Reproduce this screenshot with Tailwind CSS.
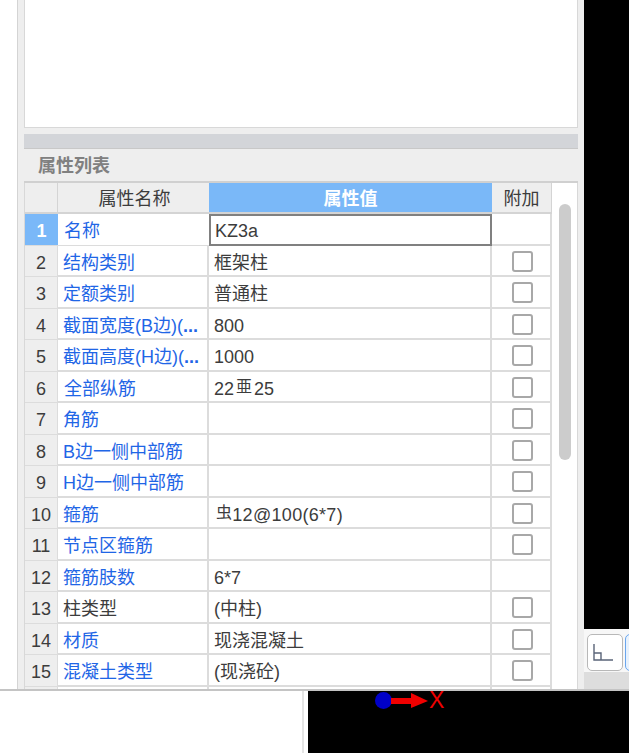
<!DOCTYPE html>
<html lang="zh-CN">

<head>
    <meta charset="UTF-8">
    <meta name="viewport" content="width=device-width, initial-scale=1.0">
    <title>属性列表</title>
    <script src="https://cdn.jsdelivr.net/npm/@tailwindcss/browser@4"></script>
</head>

<body class="bg-white overflow-hidden font-['Liberation_Sans','Noto_Sans_CJK_SC',sans-serif] text-[18px] text-[#3c3c3c]">
    <div class="relative w-[629px] h-[753px] flex flex-col">
        <div class="flex h-[691px] border-b-2 border-[#c4c4c4]">
            <div class="w-[17px] shrink-0 bg-white"></div>
            <!-- property panel -->
            <div class="w-[567px] shrink-0 flex flex-col bg-[#eeeeee] border-l border-[#d4d4d4] pl-[6px] pr-[6px]">
                <div class="h-[128px] bg-white border border-t-0 border-[#d8d8d8]"></div>
                <div class="h-[6px]"></div>
                <div class="h-[15px] bg-[#d3d5d9] border-b border-[#c8c8c8]"></div>
                <div class="h-[32px] pl-[14px] pt-[2px] flex items-center text-[#808080] font-bold">属性列表</div>
                <div class="h-[2px] bg-[#d0d0d0]"></div>
                <div class="flex flex-1 min-h-0 bg-white border-r border-l border-[#d8d8d8]">
                    <div class="w-[527px] shrink-0 overflow-hidden">
                        <!-- header -->
                        <div class="flex h-[31px] text-center leading-[33px] border-b-2 border-[#d4d4d4]">
                            <div class="w-[33px] bg-[#eeeeee] border-r border-[#d4d4d4]"></div>
                            <div class="w-[151px] bg-[#eeeeee] pl-[2px]">属性名称</div>
                            <div class="w-[283px] bg-[#7ab8f8] text-white font-bold">属性值</div>
                            <div class="w-[60px] bg-[#eeeeee] border-r border-[#d4d4d4]">附加</div>
                        </div>
                        <!-- rows -->
                        <div class="grid grid-cols-[33px_151px_283px_60px] auto-rows-[31.5px] leading-[34px]">
                            <div class="bg-[#7ab8f8] text-white font-bold text-center border-b border-[#dcdcdc]">1</div>
                            <div class="pl-[6px] text-[#1f66e6] border-b border-[#dcdcdc]">名称</div>
                            <div class="pl-[4px] border-2 border-[#808080] leading-[30px]">KZ3a</div>
                            <div class="border-r-2 border-b-2 border-[#dcdcdc]"></div>

                            <div class="bg-[#eeeeee] text-center border-r border-b border-[#dcdcdc]">2</div>
                            <div class="pl-[5px] text-[#1f66e6] border-r-2 border-b-2 border-[#dcdcdc]">结构类别</div>
                            <div class="pl-[5px] border-r-2 border-b-2 border-[#dcdcdc]">框架柱</div>
                            <div class="border-r-2 border-b-2 border-[#dcdcdc] flex items-center justify-center"><span class="w-[21px] h-[21px] ml-[2px] mt-[2px] border-2 border-[#a8a8a8] rounded-[3px] bg-white"></span></div>

                            <div class="bg-[#eeeeee] text-center border-r border-b border-[#dcdcdc]">3</div>
                            <div class="pl-[5px] text-[#1f66e6] border-r-2 border-b-2 border-[#dcdcdc]">定额类别</div>
                            <div class="pl-[5px] border-r-2 border-b-2 border-[#dcdcdc]">普通柱</div>
                            <div class="border-r-2 border-b-2 border-[#dcdcdc] flex items-center justify-center"><span class="w-[21px] h-[21px] ml-[2px] mt-[2px] border-2 border-[#a8a8a8] rounded-[3px] bg-white"></span></div>

                            <div class="bg-[#eeeeee] text-center border-r border-b border-[#dcdcdc]">4</div>
                            <div class="pl-[5px] text-[#1f66e6] border-r-2 border-b-2 border-[#dcdcdc] whitespace-nowrap overflow-hidden">截面宽度(B边)(<b>...</b></div>
                            <div class="pl-[5px] border-r-2 border-b-2 border-[#dcdcdc]">800</div>
                            <div class="border-r-2 border-b-2 border-[#dcdcdc] flex items-center justify-center"><span class="w-[21px] h-[21px] ml-[2px] mt-[2px] border-2 border-[#a8a8a8] rounded-[3px] bg-white"></span></div>

                            <div class="bg-[#eeeeee] text-center border-r border-b border-[#dcdcdc]">5</div>
                            <div class="pl-[5px] text-[#1f66e6] border-r-2 border-b-2 border-[#dcdcdc] whitespace-nowrap overflow-hidden">截面高度(H边)(<b>...</b></div>
                            <div class="pl-[5px] border-r-2 border-b-2 border-[#dcdcdc]">1000</div>
                            <div class="border-r-2 border-b-2 border-[#dcdcdc] flex items-center justify-center"><span class="w-[21px] h-[21px] ml-[2px] mt-[2px] border-2 border-[#a8a8a8] rounded-[3px] bg-white"></span></div>

                            <div class="bg-[#eeeeee] text-center border-r border-b border-[#dcdcdc]">6</div>
                            <div class="pl-[6px] text-[#1f66e6] border-r-2 border-b-2 border-[#dcdcdc]">全部纵筋</div>
                            <div class="pl-[5px] border-r-2 border-b-2 border-[#dcdcdc] flex items-start"><span>22</span><span class="text-[16px] leading-[30px] px-[2px]">亜</span><span>25</span></div>
                            <div class="border-r-2 border-b-2 border-[#dcdcdc] flex items-center justify-center"><span class="w-[21px] h-[21px] ml-[2px] mt-[2px] border-2 border-[#a8a8a8] rounded-[3px] bg-white"></span></div>

                            <div class="bg-[#eeeeee] text-center border-r border-b border-[#dcdcdc]">7</div>
                            <div class="pl-[5px] text-[#1f66e6] border-r-2 border-b-2 border-[#dcdcdc]">角筋</div>
                            <div class="pl-[5px] border-r-2 border-b-2 border-[#dcdcdc]"></div>
                            <div class="border-r-2 border-b-2 border-[#dcdcdc] flex items-center justify-center"><span class="w-[21px] h-[21px] ml-[2px] mt-[2px] border-2 border-[#a8a8a8] rounded-[3px] bg-white"></span></div>

                            <div class="bg-[#eeeeee] text-center border-r border-b border-[#dcdcdc]">8</div>
                            <div class="pl-[5px] text-[#1f66e6] border-r-2 border-b-2 border-[#dcdcdc] whitespace-nowrap">B边一侧中部筋</div>
                            <div class="pl-[5px] border-r-2 border-b-2 border-[#dcdcdc]"></div>
                            <div class="border-r-2 border-b-2 border-[#dcdcdc] flex items-center justify-center"><span class="w-[21px] h-[21px] ml-[2px] mt-[2px] border-2 border-[#a8a8a8] rounded-[3px] bg-white"></span></div>

                            <div class="bg-[#eeeeee] text-center border-r border-b border-[#dcdcdc]">9</div>
                            <div class="pl-[5px] text-[#1f66e6] border-r-2 border-b-2 border-[#dcdcdc] whitespace-nowrap">H边一侧中部筋</div>
                            <div class="pl-[5px] border-r-2 border-b-2 border-[#dcdcdc]"></div>
                            <div class="border-r-2 border-b-2 border-[#dcdcdc] flex items-center justify-center"><span class="w-[21px] h-[21px] ml-[2px] mt-[2px] border-2 border-[#a8a8a8] rounded-[3px] bg-white"></span></div>

                            <div class="bg-[#eeeeee] text-center border-r border-b border-[#dcdcdc]">10</div>
                            <div class="pl-[5px] text-[#1f66e6] border-r-2 border-b-2 border-[#dcdcdc]">箍筋</div>
                            <div class="pl-[7px] tracking-[0.3px] border-r-2 border-b-2 border-[#dcdcdc] flex items-start"><span class="text-[16px] leading-[30px]">虫</span><span>12@100(6*7)</span></div>
                            <div class="border-r-2 border-b-2 border-[#dcdcdc] flex items-center justify-center"><span class="w-[21px] h-[21px] ml-[2px] mt-[2px] border-2 border-[#a8a8a8] rounded-[3px] bg-white"></span></div>

                            <div class="bg-[#eeeeee] text-center border-r border-b border-[#dcdcdc]">11</div>
                            <div class="pl-[5px] text-[#1f66e6] border-r-2 border-b-2 border-[#dcdcdc]">节点区箍筋</div>
                            <div class="pl-[5px] border-r-2 border-b-2 border-[#dcdcdc]"></div>
                            <div class="border-r-2 border-b-2 border-[#dcdcdc] flex items-center justify-center"><span class="w-[21px] h-[21px] ml-[2px] mt-[2px] border-2 border-[#a8a8a8] rounded-[3px] bg-white"></span></div>

                            <div class="bg-[#eeeeee] text-center border-r border-b border-[#dcdcdc]">12</div>
                            <div class="pl-[5px] text-[#1f66e6] border-r-2 border-b-2 border-[#dcdcdc]">箍筋肢数</div>
                            <div class="pl-[5px] border-r-2 border-b-2 border-[#dcdcdc]">6*7</div>
                            <div class="border-r-2 border-b-2 border-[#dcdcdc]"></div>

                            <div class="bg-[#eeeeee] text-center border-r border-b border-[#dcdcdc]">13</div>
                            <div class="pl-[5px] border-r-2 border-b-2 border-[#dcdcdc]">柱类型</div>
                            <div class="pl-[5px] border-r-2 border-b-2 border-[#dcdcdc]">(中柱)</div>
                            <div class="border-r-2 border-b-2 border-[#dcdcdc] flex items-center justify-center"><span class="w-[21px] h-[21px] ml-[2px] mt-[2px] border-2 border-[#a8a8a8] rounded-[3px] bg-white"></span></div>

                            <div class="bg-[#eeeeee] text-center border-r border-b border-[#dcdcdc]">14</div>
                            <div class="pl-[5px] text-[#1f66e6] border-r-2 border-b-2 border-[#dcdcdc]">材质</div>
                            <div class="pl-[5px] border-r-2 border-b-2 border-[#dcdcdc]">现浇混凝土</div>
                            <div class="border-r-2 border-b-2 border-[#dcdcdc] flex items-center justify-center"><span class="w-[21px] h-[21px] ml-[2px] mt-[2px] border-2 border-[#a8a8a8] rounded-[3px] bg-white"></span></div>

                            <div class="bg-[#eeeeee] text-center border-r border-b border-[#dcdcdc]">15</div>
                            <div class="pl-[5px] text-[#1f66e6] border-r-2 border-b-2 border-[#dcdcdc]">混凝土类型</div>
                            <div class="pl-[5px] border-r-2 border-b-2 border-[#dcdcdc]">(现浇砼)</div>
                            <div class="border-r-2 border-b-2 border-[#dcdcdc] flex items-center justify-center"><span class="w-[21px] h-[21px] ml-[2px] mt-[2px] border-2 border-[#a8a8a8] rounded-[3px] bg-white"></span></div>

                            <div class="bg-[#eeeeee] border-r border-[#dcdcdc]"></div>
                            <div class="border-r-2 border-[#dcdcdc]"></div>
                            <div class="border-r-2 border-[#dcdcdc]"></div>
                            <div class="border-r-2 border-[#dcdcdc]"></div>
                        </div>
                    </div>
                    <!-- scrollbar -->
                    <div class="flex-1 pt-[21px] pl-[7px]">
                        <div class="w-[12px] h-[256px] rounded-full bg-[#cccccc]"></div>
                    </div>
                </div>
            </div>
            <!-- right side -->
            <div class="flex-1 min-w-0 flex flex-col">
                <div class="h-[629px] bg-black"></div>
                <div class="h-[43px] bg-[#f7f7f7] flex gap-[2px] pl-[3px] pt-[5px] overflow-hidden">
                    <div class="w-[36px] h-[37px] shrink-0 rounded-[5px] border border-[#b8b8b8] bg-white flex items-center justify-center">
                        <svg width="24" height="20" viewBox="0 0 24 20" fill="none" stroke="#5a6478" stroke-width="1.4">
                            <path d="M1 1V17H20M1 10H8V17" />
                        </svg>
                    </div>
                    <div class="w-[36px] h-[37px] shrink-0 rounded-[5px] border border-[#6aa6ee] bg-[#e8f2fd]"></div>
                </div>
                <div class="flex-1 bg-[#dddddd]"></div>
            </div>
        </div>
        <!-- bottom strip -->
        <div class="flex-1 flex">
            <div class="w-[302px] bg-white"></div>
            <div class="w-[2px] bg-[#e4e4e4]"></div>
            <div class="w-[4px] bg-white"></div>
            <div class="flex-1 bg-black"></div>
        </div>
        <!-- axis marker over the viewport -->
        <div class="absolute left-[375px] top-[691px] h-[20px] flex items-center">
            <span class="w-[17px] h-[17px] rounded-full bg-[#0000c8] -mt-[1px]"></span>
            <svg width="38" height="18" viewBox="0 0 38 18" class="-ml-[1px] -mt-[1px]">
                <path d="M0 6H20V1L37 9L20 16V12H0Z" fill="#f00000" />
            </svg>
            <span class="text-[#f00000] text-[23px] leading-[20px] -mt-[2px]">X</span>
        </div>
    </div>
</body>

</html>
